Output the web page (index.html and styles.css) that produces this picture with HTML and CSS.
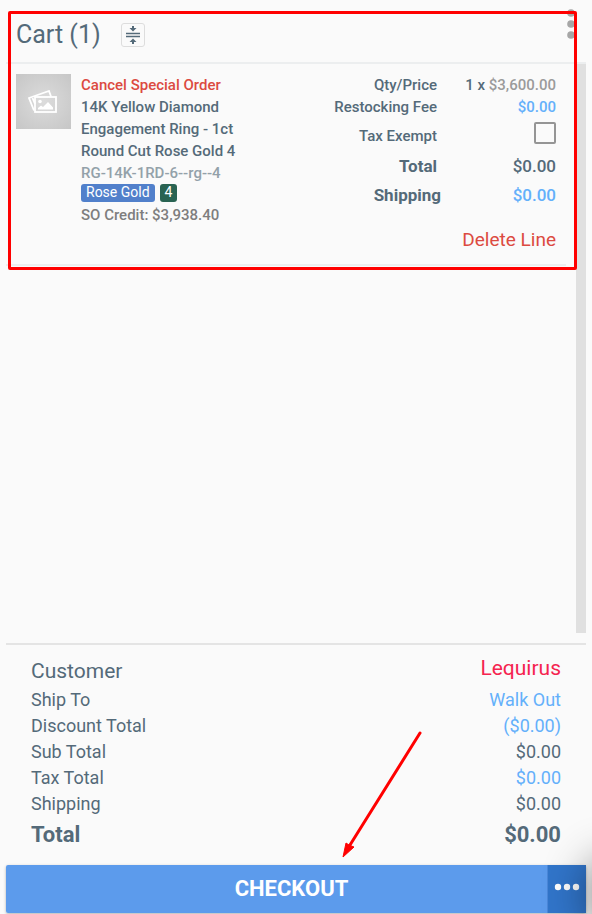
FILE: index.html
```html
<!DOCTYPE html>
<html lang="en">
<head>
  <meta charset="utf-8">
  <meta name="viewport" content="width=device-width, initial-scale=1">
  <title>Cart</title>
  <link rel="stylesheet" href="styles.css">
</head>
<body>
  <div class="cart">
    <header class="cart-header">
      <h1>Cart (1)</h1>
      <button class="collapse-btn" aria-label="Collapse lines">
        <svg width="16" height="18" viewBox="0 0 16 18">
          <path d="M1 7.500h14M1 10.500h14" stroke="currentColor" stroke-width="1.300"/>
          <path d="M7 0h2v2h2.500L8 5.500 4.500 2H7zM7 18h2v-2h2.500L8 12.500 4.500 16H7z" fill="currentColor"/>
        </svg>
      </button>
      <button class="menu-btn" aria-label="Cart menu">
        <svg width="8" height="30" viewBox="0 0 8 30" fill="#a6a6a6">
          <circle cx="4" cy="4" r="3.800"/>
          <circle cx="4" cy="15" r="3.800"/>
          <circle cx="4" cy="26" r="3.800"/>
        </svg>
      </button>
    </header>

    <main class="cart-body">
      <div class="cart-lines">
        <article class="line">
          <div class="thumb">
            <svg width="30" height="24" viewBox="0 0 30 24" fill="none" stroke="#fff" stroke-width="1.800">
              <path d="M6 20.500 1 8 21 1 23 6.500"/>
              <path d="M4.500 8 7 14"/>
              <rect x="7" y="7" width="21" height="15"/>
              <circle cx="12" cy="11.500" r="1.800" fill="#fff" stroke="none"/>
              <path d="M10 19.500v-1.500l3-2.500 2 1.500 5-5 5 5.500v2z" fill="#fff" stroke="none"/>
            </svg>
          </div>
          <div class="info">
            <a class="cancel" href="#cancel">Cancel Special Order</a>
            <div>14K Yellow Diamond Engagement Ring - 1ct Round Cut Rose Gold 4</div>
            <div class="sku">RG-14K-1RD-6--rg--4</div>
            <div class="tags">
              <span class="tag">Rose Gold</span>
              <span class="tag tag-size">4</span>
            </div>
            <div class="credit">SO Credit: $3,938.40</div>
          </div>
          <div class="prices">
            <div class="price-row">
              <span class="label">Qty/Price</span>
              <span>1 x <span class="muted">$3,600.00</span></span>
            </div>
            <div class="price-row">
              <span class="label">Restocking Fee</span>
              <a href="#restocking">$0.00</a>
            </div>
            <div class="price-row tax-row">
              <label class="label" for="tax-exempt">Tax Exempt</label>
              <input type="checkbox" id="tax-exempt">
            </div>
            <div class="price-row strong">
              <span class="label">Total</span>
              <span>$0.00</span>
            </div>
            <div class="price-row strong shipping">
              <span class="label">Shipping</span>
              <a href="#line-shipping">$0.00</a>
            </div>
            <button class="delete-btn">Delete Line</button>
          </div>
        </article>
      </div>
      <div class="track"></div>
    </main>

    <footer class="summary">
      <div class="sum-row customer"><span>Customer</span><a href="#customer">Lequirus</a></div>
      <div class="sum-row"><span>Ship To</span><a href="#ship-to">Walk Out</a></div>
      <div class="sum-row"><span>Discount Total</span><a href="#discount">($0.00)</a></div>
      <div class="sum-row"><span>Sub Total</span><span>$0.00</span></div>
      <div class="sum-row"><span>Tax Total</span><a href="#tax">$0.00</a></div>
      <div class="sum-row"><span>Shipping</span><span>$0.00</span></div>
      <div class="sum-row total"><span>Total</span><span>$0.00</span></div>
    </footer>

    <div class="actions">
      <button class="checkout-btn">CHECKOUT</button>
      <button class="more-btn" aria-label="More options">
        <svg width="26" height="8" viewBox="0 0 26 8" fill="#fff">
          <circle cx="4" cy="4" r="3.200"/>
          <circle cx="13" cy="4" r="3.200"/>
          <circle cx="22" cy="4" r="3.200"/>
        </svg>
      </button>
    </div>

    <div class="corner-shade"></div>
    <div class="highlight"></div>
    <svg class="arrow" width="80" height="128" viewBox="0 0 80 128">
      <path d="M78 3 8 115" stroke="#f00" stroke-width="3" stroke-linecap="round"/>
      <path d="M1 127 4 113 7 115 12 117Z" fill="#f00" stroke="#f00" stroke-width="1"/>
    </svg>
  </div>
</body>
</html>
```

FILE: styles.css
```css
:root {
  --text: #546a79;
  --link: #64b0fa;
  --danger: #dc4a41;
  --line: #eceeef;
}

* {
  box-sizing: border-box;
}

body {
  margin: 0;
  background: #fafafa;
  color: var(--text);
  font-family: Roboto, Arial, sans-serif;
}

button {
  padding: 0;
  border: none;
  background: none;
  color: inherit;
  font-family: inherit;
  cursor: pointer;
}

a {
  color: var(--link);
  text-decoration: none;
}

svg {
  display: block;
}

.cart {
  position: relative;
  display: flex;
  flex-direction: column;
  min-height: 100vh;
  padding: 0 6px 1px;
  overflow: hidden;
}

/* Header */
.cart-header {
  display: flex;
  align-items: center;
  gap: 20px;
  height: 64px;
  padding: 8px 10px 0;
  border-bottom: 2px solid var(--line);
}

.cart-header h1 {
  margin: 0;
  font-size: 25px;
  font-weight: 400;
  line-height: 32px;
}

.collapse-btn {
  display: flex;
  align-items: center;
  justify-content: center;
  width: 24px;
  height: 24px;
  border: 1px solid #ddd;
  border-radius: 3px;
}

.menu-btn {
  align-self: flex-start;
  margin: 1px 1px 0 auto;
}

/* Lines */
.cart-body {
  display: flex;
  flex: 1;
  margin-bottom: 10px;
}

.cart-lines {
  flex: 1;
  padding-right: 10px;
}

.track {
  width: 10px;
  background: #e0e0e0;
}

.line {
  display: flex;
  gap: 10px;
  padding: 10px 10px 12px;
  border-bottom: 2px solid var(--line);
  font-size: 15px;
  font-weight: 500;
  line-height: 22px;
}

.thumb {
  display: flex;
  align-items: center;
  justify-content: center;
  width: 55px;
  height: 55px;
  padding-right: 2px;
  background: radial-gradient(#dcdcdc, #c6c6c6);
}

.info {
  width: 168px;
}

.cancel {
  color: var(--danger);
}

.sku {
  color: #93a1a9;
}

.tags {
  display: flex;
  gap: 5px;
  margin-bottom: 2px;
}

.tag {
  height: 18px;
  padding: 0 5px;
  border-radius: 3px;
  background: #5180cb;
  color: #fff;
  font-size: 14px;
  font-weight: 400;
  line-height: 17px;
}

.tag-size {
  background: #296352;
}

.credit {
  color: #7e7e7e;
}

.prices {
  display: flex;
  flex: 1;
  flex-direction: column;
}

.price-row {
  display: flex;
  justify-content: flex-end;
  text-align: right;
}

.price-row > :last-child {
  flex: none;
  width: 119px;
}

.muted {
  color: #9b9b9b;
}

.tax-row {
  justify-content: space-between;
  align-items: center;
  padding: 1px 0 5px;
}

.tax-row .label {
  flex: 1;
  margin-right: 97px;
  padding-top: 6px;
}

.tax-row > #tax-exempt {
  width: 22px;
  height: 22px;
  margin: 0;
  border: 2px solid #959595;
  border-radius: 2px;
  appearance: none;
}

#tax-exempt:checked {
  background: var(--link);
}

.strong {
  font-size: 17px;
  line-height: 29px;
}

.strong .label {
  font-weight: 700;
}

.shipping > :last-child {
  width: 115px;
}

.delete-btn {
  align-self: flex-end;
  margin-top: 18px;
  color: var(--danger);
  font-size: 19px;
  line-height: 24px;
}

/* Summary */
.summary {
  padding: 10px 25px 12px;
  border-top: 2px solid #e4e4e4;
  font-size: 18px;
  line-height: 26px;
}

.sum-row {
  display: flex;
  justify-content: space-between;
}

.customer {
  font-size: 21px;
  line-height: 32px;
}

.customer a {
  margin-top: -3px;
  color: #f5234f;
}

.total {
  font-size: 22px;
  font-weight: 700;
  line-height: 36px;
}

.actions {
  display: flex;
  height: 48px;
  border-radius: 2px;
  box-shadow: 0 1px 3px rgba(0, 0, 0, 0.3);
}

.checkout-btn {
  flex: 1;
  padding: 0 0 2px 30px;
  border-radius: 2px 0 0 2px;
  background: #5c9bec;
  color: #fff;
  font-size: 22px;
  font-weight: 700;
}

.more-btn {
  display: flex;
  align-items: center;
  justify-content: center;
  width: 39px;
  padding-bottom: 4px;
  border-left: 1px solid #4b88d9;
  background: #3175ca;
}

/* Overlays */
.corner-shade {
  position: absolute;
  right: -50px;
  bottom: -10px;
  width: 50px;
  height: 60px;
  border-radius: 30px;
  box-shadow: 0 0 44px 6px rgba(0, 0, 0, 0.45);
  pointer-events: none;
}

.highlight {
  position: absolute;
  top: 11px;
  right: 15px;
  left: 8px;
  height: 259px;
  border: 3px solid #f00;
  border-radius: 2px;
  pointer-events: none;
}

.arrow {
  position: absolute;
  right: 170px;
  bottom: 56px;
  pointer-events: none;
}
```
